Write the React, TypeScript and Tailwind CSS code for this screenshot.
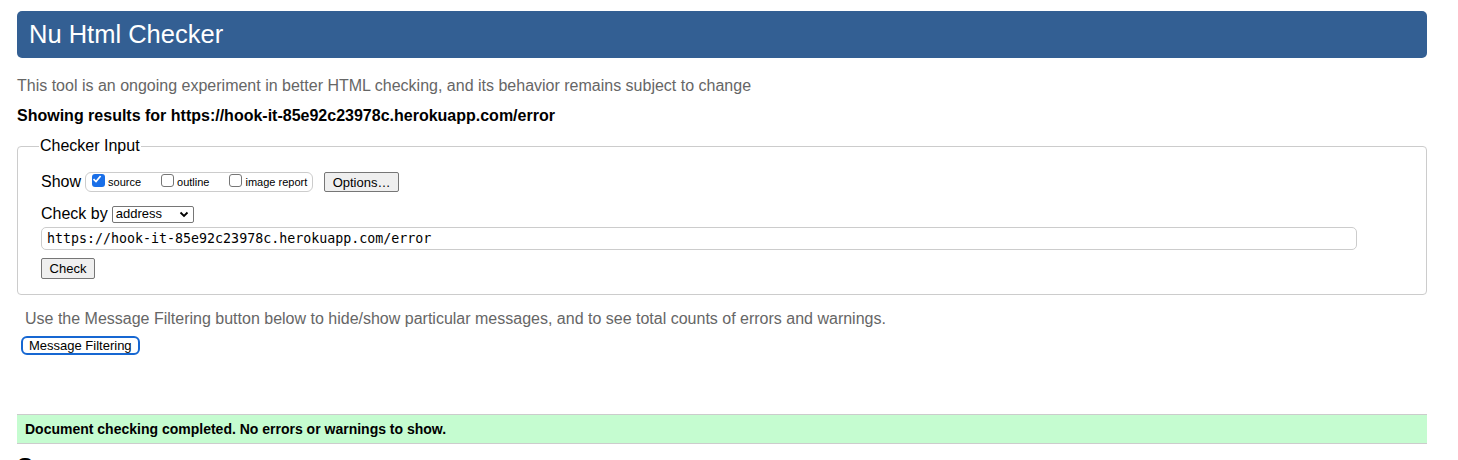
import React from "react";

export default function App() {
  return (
    <div className="w-[1458px] h-[460px] overflow-hidden bg-white font-['Liberation_Sans',Arial,sans-serif] text-black">
      <div className="pl-[17px] pr-[31px] pt-[11px]">
        <div className="h-[47px] rounded-[5px] bg-[#335f93] pl-[12px] flex items-center">
          <h1 className="text-[25.5px] text-white leading-none">Nu Html Checker</h1>
        </div>
        <p className="mt-[18px] text-[16px] leading-[20px] text-[#666]">
          This tool is an ongoing experiment in better HTML checking, and its behavior remains subject to change
        </p>
        <p className="mt-[10px] text-[16px] leading-[20px] font-bold">
          Showing results for https://hook-it-85e92c23978c.herokuapp.com/error
        </p>
        <fieldset className="mt-[11px] border border-[#ccc] rounded-[4px] pl-[23px] pb-[14px]">
          <legend className="text-[16px] leading-[18px] px-[1px] ml-[-2px]">Checker Input</legend>
          <div className="flex items-center mt-[17px] h-[20px]">
            <span className="text-[16px]">Show</span>
            <div className="ml-[4px] h-[20px] w-[228px] border border-[#ccc] rounded-[6px] flex items-center text-[11px] pl-[6px]">
              <span className="inline-block w-[13px] h-[13px] rounded-[3px] bg-[#1a6fe8] flex items-center justify-center mt-[-4px]">
                <svg width="10" height="10" viewBox="0 0 10 10">
                  <path d="M1.5 5.2 L4 7.6 L8.6 2" stroke="white" strokeWidth="1.7" fill="none" />
                </svg>
              </span>
              <span className="ml-[3px]">source</span>
              <span className="ml-[20px] inline-block w-[13px] h-[13px] rounded-[3px] border border-[#767676] mt-[-4px]" />
              <span className="ml-[3px]">outline</span>
              <span className="ml-[20px] inline-block w-[13px] h-[13px] rounded-[3px] border border-[#767676] mt-[-4px]" />
              <span className="ml-[3px]">image report</span>
            </div>
            <button className="ml-[11px] h-[20px] w-[75px] border border-[#767676] rounded-[2px] bg-[#efefef] text-[13px] leading-none">
              Options…
            </button>
          </div>
          <div className="flex items-center mt-[13px] h-[18px]">
            <span className="text-[16px]">Check by</span>
            <div className="ml-[4px] w-[82px] h-[17px] border border-[#767676] rounded-[2px] flex items-center justify-between pl-[3px] pr-[4px] text-[13px]">
              <span>address</span>
              <svg width="10" height="7" viewBox="0 0 10 7">
                <path d="M1.5 1.5 L5 5 L8.5 1.5" stroke="black" strokeWidth="1.8" fill="none" />
              </svg>
            </div>
          </div>
          <div className="mt-[4px] w-[1316px] h-[23px] border border-[#ccc] rounded-[5px] flex items-center pl-[5px] text-[13.3px] font-['DejaVu_Sans_Mono',monospace]">
            https://hook-it-85e92c23978c.herokuapp.com/error
          </div>
          <button className="mt-[8px] h-[21px] w-[54px] border border-[#767676] rounded-[2px] bg-[#efefef] text-[13px] leading-none">
            Check
          </button>
        </fieldset>
        <p className="mt-[14px] ml-[8px] text-[16px] leading-[20px] text-[#666]">
          Use the Message Filtering button below to hide/show particular messages, and to see total counts of errors and warnings.
        </p>
        <button className="mt-[7px] ml-[4px] h-[19px] px-[6px] border-2 border-[#1667d2] rounded-[6px] bg-white text-[13px] leading-none">
          Message Filtering
        </button>
        <div className="mt-[57px] h-[30px] bg-[#c5fcd0] border-y border-[#ccc] flex items-center pl-[8px] text-[14px] font-bold">
          Document checking completed. No errors or warnings to show.
        </div>
        <div className="mt-[11px] text-[24px] font-bold leading-none">Source</div>
      </div>
    </div>
  );
}
